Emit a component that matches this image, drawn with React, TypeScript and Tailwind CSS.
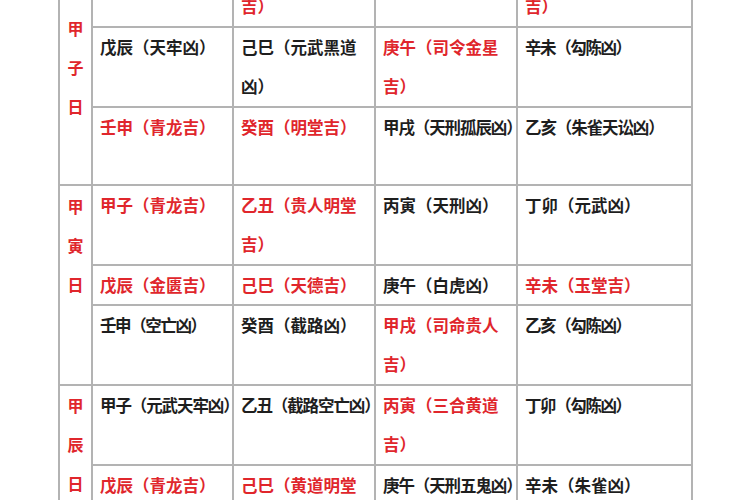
import React from "react";

type Cell = { lines: string[]; red?: boolean; t?: 1 | 2 };
type Row = { h: string; cells: Cell[] };
type Group = { label: string[]; labelPad: string; rows: Row[] };

const groups: Group[] = [
  {
    label: ["甲", "子", "日"],
    labelPad: "pt-[61px]",
    rows: [
      {
        h: "h-[80px]",
        cells: [
          { lines: ["甲子（金匮吉）"], red: true },
          { lines: ["乙丑（天德贵人", "吉）"], red: true },
          { lines: ["丙寅（白虎凶）"] },
          { lines: ["丁卯（玉堂少微", "吉）"], red: true },
        ],
      },
      {
        h: "h-[80px]",
        cells: [
          { lines: ["戊辰（天牢凶）"] },
          { lines: ["己巳（元武黑道", "凶）"] },
          { lines: ["庚午（司令金星", "吉）"], red: true },
          { lines: ["辛未（勾陈凶）"], t: 2 },
        ],
      },
      {
        h: "h-[78px]",
        cells: [
          { lines: ["壬申（青龙吉）"], red: true },
          { lines: ["癸酉（明堂吉）"], red: true },
          { lines: ["甲戌（天刑孤辰凶）"], t: 1 },
          { lines: ["乙亥（朱雀天讼凶）"], t: 1 },
        ],
      },
    ],
  },
  {
    label: ["甲", "寅", "日"],
    labelPad: "pt-[1px]",
    rows: [
      {
        h: "h-[80px]",
        cells: [
          { lines: ["甲子（青龙吉）"], red: true },
          { lines: ["乙丑（贵人明堂", "吉）"], red: true },
          { lines: ["丙寅（天刑凶）"] },
          { lines: ["丁卯（元武凶）"] },
        ],
      },
      {
        h: "h-[40px]",
        cells: [
          { lines: ["戊辰（金匮吉）"], red: true },
          { lines: ["己巳（天德吉）"], red: true },
          { lines: ["庚午（白虎凶）"] },
          { lines: ["辛未（玉堂吉）"], red: true },
        ],
      },
      {
        h: "h-[80px]",
        cells: [
          { lines: ["壬申（空亡凶）"], t: 2 },
          { lines: ["癸酉（截路凶）"] },
          { lines: ["甲戌（司命贵人", "吉）"], red: true },
          { lines: ["乙亥（勾陈凶）"], t: 2 },
        ],
      },
    ],
  },
  {
    label: ["甲", "辰", "日"],
    labelPad: "pt-0",
    rows: [
      {
        h: "h-[80px]",
        cells: [
          { lines: ["甲子（元武天牢凶）"], t: 1 },
          { lines: ["乙丑（截路空亡凶）"], t: 1 },
          { lines: ["丙寅（三合黄道", "吉）"], red: true },
          { lines: ["丁卯（勾陈凶）"], t: 2 },
        ],
      },
      {
        h: "h-[80px]",
        cells: [
          { lines: ["戊辰（青龙吉）"], red: true },
          { lines: ["己巳（黄道明堂", "吉）"], red: true },
          { lines: ["庚午（天刑五鬼凶）"], t: 1 },
          { lines: ["辛未（朱雀凶）"] },
        ],
      },
    ],
  },
];

const widths = ["w-[141px]", "w-[142px]", "w-[142px]", "w-[175px]"];

function TableCell({ cell, w }: { cell: Cell; w: string }) {
  const track =
    cell.t === 1 ? "tracking-[-1.1px]" : cell.t === 2 ? "tracking-[-1.4px]" : "tracking-[0px]";
  return (
    <div
      className={`${w} shrink-0 border-r-2 border-[#b3b3b3] pl-[7px] ${
        cell.red ? "text-[#e0262c]" : "text-[#1e1e1e]"
      }`}
    >
      {cell.lines.map((l, i) => (
        <div key={i} className={`whitespace-nowrap ${track}`}>
          {l}
        </div>
      ))}
    </div>
  );
}

export default function App() {
  return (
    <div
      className="w-[750px] h-[500px] overflow-hidden bg-white"
      style={{ fontFamily: '"Noto Sans CJK SC", "Noto Sans", sans-serif' }}
    >
      <div className="ml-[58px] -mt-[52px] w-[635px] border-l-2 border-[#b3b3b3] text-[16.5px] leading-[39px] font-bold">
        {groups.map((g, gi) => (
          <div key={gi} className="flex">
            <div
              className={`w-[33px] shrink-0 border-r-2 border-b-2 border-[#b3b3b3] text-[#e0262c] text-center text-[16px] ${g.labelPad}`}
            >
              {g.label.map((c, i) => (
                <div key={i}>{c}</div>
              ))}
            </div>
            <div className="flex flex-col">
              {g.rows.map((r, ri) => (
                <div key={ri} className={`flex ${r.h} border-b-2 border-[#b3b3b3]`}>
                  {r.cells.map((c, ci) => (
                    <TableCell key={ci} cell={c} w={widths[ci]} />
                  ))}
                </div>
              ))}
            </div>
          </div>
        ))}
      </div>
    </div>
  );
}
